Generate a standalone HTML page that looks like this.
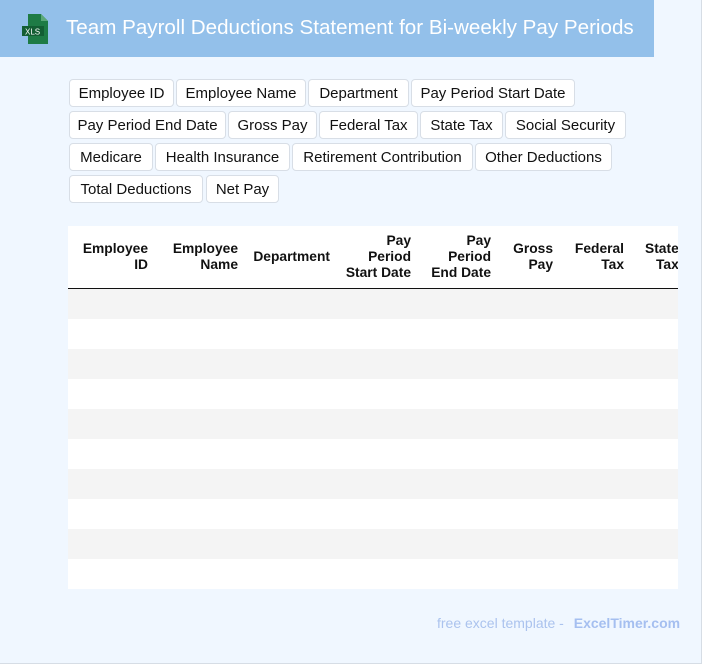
<!DOCTYPE html>
<html><head><meta charset="utf-8"><style>
*{margin:0;padding:0;box-sizing:border-box}
body{width:702px;height:664px;background:#f0f7ff;font-family:"Liberation Sans",sans-serif;position:relative;overflow:hidden;border-right:1px solid #d6dde5;border-bottom:1px solid #d6dde5}
.hdr{position:absolute;left:0;top:0;width:654px;height:57px;background:#93c0ea}
.hdr .t{position:absolute;left:66px;top:16px;color:#fff;font-size:20.6px;white-space:nowrap}
.chip{position:absolute;height:28px;background:#fff;border:1px solid #d8dee6;border-radius:4px;font-size:15px;line-height:27px;text-align:center;color:#111;white-space:nowrap}
.tbl{position:absolute;left:68px;top:226px;width:610px;height:363px;background:#fff;overflow:hidden}
.h{position:absolute;font-weight:bold;font-size:13.8px;line-height:16px;text-align:right;color:#111;white-space:nowrap}
.line{position:absolute;left:0;top:62px;width:610px;height:1.5px;background:#111}
.r{position:absolute;left:0;width:610px;height:30px;background:#f4f4f4}
.foot{position:absolute;left:437px;top:615px;font-size:14px;color:#abc3ee;white-space:nowrap}
.foot b{color:#a5bff0;margin-left:6px}
</style></head><body>
<div class="hdr">
<svg style="position:absolute;left:22px;top:14px" width="28" height="30" viewBox="0 0 28 30"><path d="M6 0h13l7 7v23H6z" fill="#1e7b45"/><path d="M19 0l7 7h-7z" fill="#5aa878"/><rect x="0" y="12" width="22" height="10" fill="#135e33"/><text x="3" y="20.5" font-size="8" fill="#fff" font-family="Liberation Sans">XLS</text></svg>
<div class="t">Team Payroll Deductions Statement for Bi-weekly Pay Periods</div>
</div>
<div class="chip" style="left:69px;top:79px;width:105px">Employee ID</div>
<div class="chip" style="left:176px;top:79px;width:130px">Employee Name</div>
<div class="chip" style="left:308px;top:79px;width:101px">Department</div>
<div class="chip" style="left:411px;top:79px;width:164px">Pay Period Start Date</div>
<div class="chip" style="left:69px;top:111px;width:157px">Pay Period End Date</div>
<div class="chip" style="left:228px;top:111px;width:89px">Gross Pay</div>
<div class="chip" style="left:319px;top:111px;width:99px">Federal Tax</div>
<div class="chip" style="left:420px;top:111px;width:83px">State Tax</div>
<div class="chip" style="left:505px;top:111px;width:121px">Social Security</div>
<div class="chip" style="left:69px;top:143px;width:84px">Medicare</div>
<div class="chip" style="left:155px;top:143px;width:135px">Health Insurance</div>
<div class="chip" style="left:292px;top:143px;width:181px">Retirement Contribution</div>
<div class="chip" style="left:475px;top:143px;width:137px">Other Deductions</div>
<div class="chip" style="left:69px;top:175px;width:134px">Total Deductions</div>
<div class="chip" style="left:206px;top:175px;width:73px">Net Pay</div>
<div class="tbl">
<div class="h" style="right:530px;top:15px">Employee<br>ID</div>
<div class="h" style="right:440px;top:15px">Employee<br>Name</div>
<div class="h" style="right:348px;top:23px">Department</div>
<div class="h" style="right:267px;top:7px">Pay<br>Period<br>Start Date</div>
<div class="h" style="right:187px;top:7px">Pay<br>Period<br>End Date</div>
<div class="h" style="right:125px;top:15px">Gross<br>Pay</div>
<div class="h" style="right:54px;top:15px">Federal<br>Tax</div>
<div class="h" style="left:577px;top:15px">State<br>&nbsp;&nbsp;Tax</div>
<div class="line"></div>
<div class="r" style="top:63px"></div>
<div class="r" style="top:123px"></div>
<div class="r" style="top:183px"></div>
<div class="r" style="top:243px"></div>
<div class="r" style="top:303px"></div>
</div>
<div class="foot">free excel template - <b>ExcelTimer.com</b></div>
</body></html>
